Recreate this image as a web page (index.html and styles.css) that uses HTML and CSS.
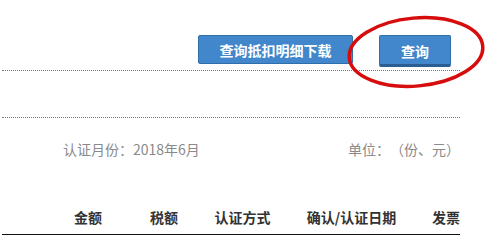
FILE: index.html
```html
<!DOCTYPE html>
<html lang="zh-CN">
<head>
<meta charset="utf-8">
<title>认证查询</title>
<link rel="stylesheet" href="styles.css">
</head>
<body>
<div class="page">
  <div class="toolbar">
    <button class="btn btn-wide">查询抵扣明细下载</button>
    <button class="btn btn-query">查询</button>
  </div>
  <div class="blank"></div>
  <div class="info">
    <span>认证月份：2018年6月</span>
    <span>单位：（份、元）</span>
  </div>
  <div class="thead">
    <span></span>
    <span class="th">金额</span>
    <span class="th">税额</span>
    <span class="th">认证方式</span>
    <span class="th">确认/认证日期</span>
    <span class="th th-last">发票</span>
  </div>
  <svg class="circle" width="152" height="86" viewBox="0 0 152 86">
    <ellipse cx="77" cy="42" rx="67" ry="34" transform="rotate(-5 77 42)" fill="none" stroke="#d70d0d" stroke-width="3.5"/>
  </svg>
</div>
</body>
</html>
```
FILE: styles.css
```css
html, body {
  margin: 0;
  padding: 0;
  background: #fff;
}
body {
  font-family: "Noto Sans CJK SC", "Microsoft YaHei", sans-serif;
  font-size: 14px;
  text-spacing-trim: space-all;
}
.page {
  position: relative;
  width: 458px;
  margin-left: 2px;
  height: 236px;
}
.toolbar {
  box-sizing: border-box;
  height: 71px;
  padding: 35px 9px 0 0;
  display: flex;
  justify-content: flex-end;
  align-items: flex-start;
  gap: 26px;
  border-bottom: 1px dotted #777;
}
.btn {
  font-family: inherit;
  font-size: 14px;
  font-weight: bold;
  color: #fff;
  background: #4287cb;
  border: 1px solid #2f6ea8;
  border-radius: 2px;
  padding: 0;
  line-height: 20px;
  margin: 0;
}
.btn-wide {
  width: 155px;
  height: 29px;
}
.btn-query {
  width: 72px;
  height: 32px;
  border-bottom: 3px solid #2c5e92;
  padding-top: 2px;
}
.blank {
  box-sizing: border-box;
  height: 47px;
  border-bottom: 1px dotted #777;
}
.info {
  display: flex;
  justify-content: space-between;
  padding: 21px 0 21px 61px;
  line-height: 20px;
  color: #8a8a8a;
}
.thead {
  display: grid;
  grid-template-columns: 48px 76px 76px 81px 137px 1fr;
  padding: 27px 0 7px;
  line-height: 20px;
  border-bottom: 1px solid #111;
  font-weight: bold;
  color: #333;
}
.th {
  text-align: center;
}
.th-last {
  text-align: right;
}
.circle {
  position: absolute;
  left: 337px;
  top: 10px;
}
```
